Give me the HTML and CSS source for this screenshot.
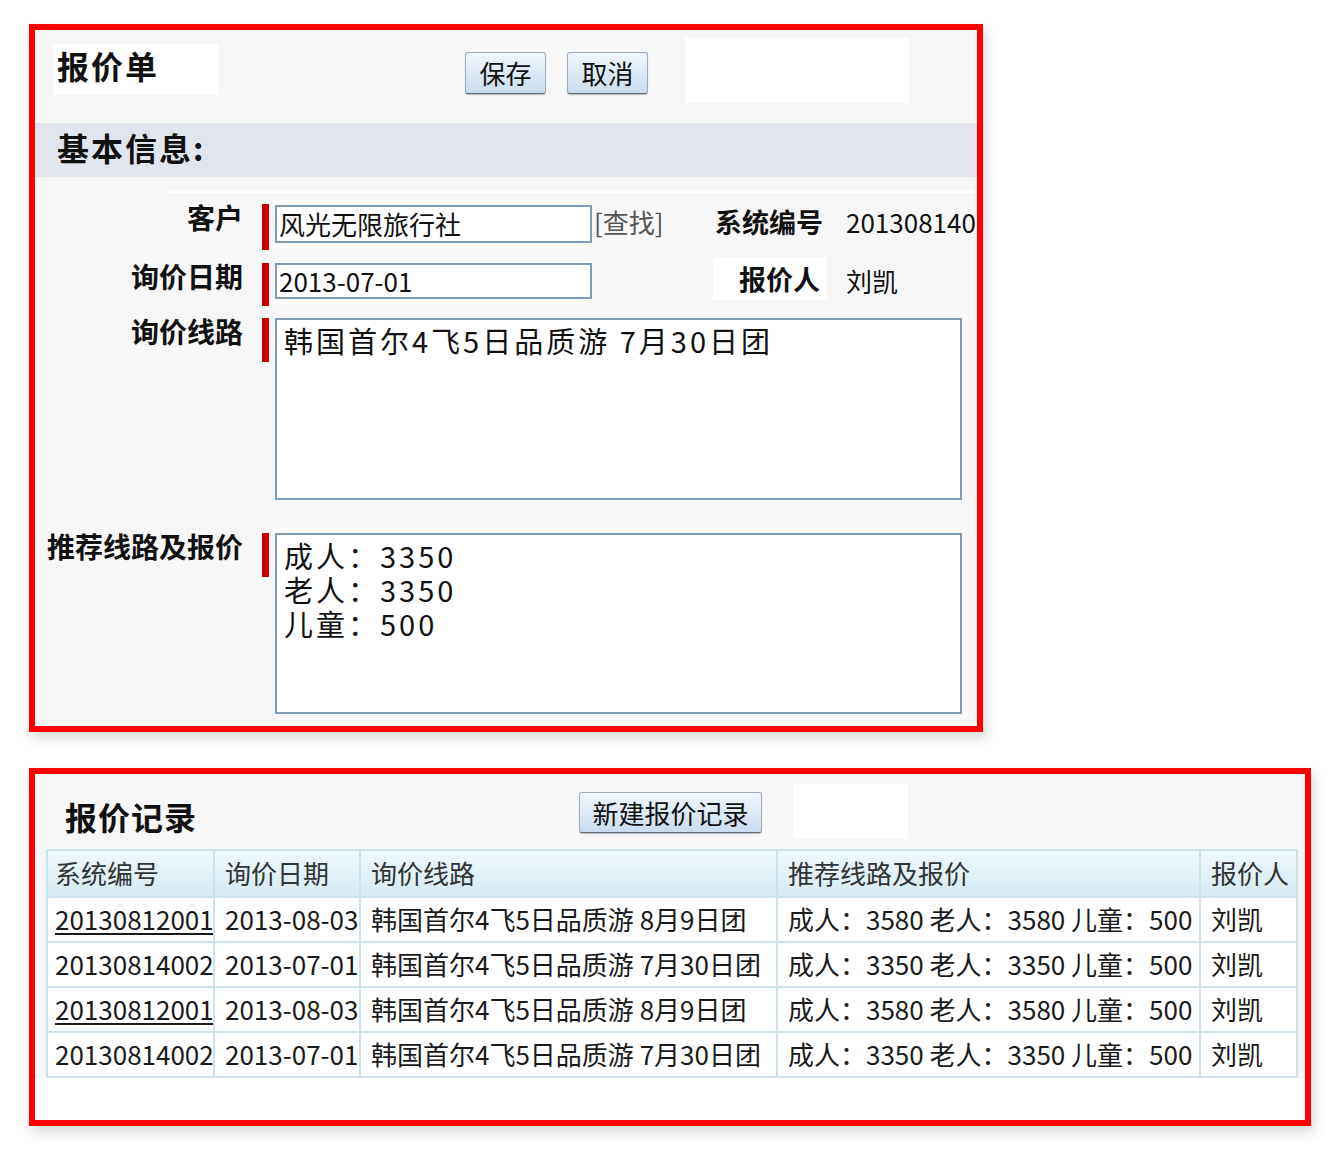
FILE: index.html
```html
<!DOCTYPE html>
<html lang="zh-CN">
<head>
    <meta charset="UTF-8">
    <meta name="viewport" content="width=device-width, initial-scale=1.0">
    <title>报价单</title>
    <link rel="stylesheet" href="styles.css">
</head>
<body>
    <div class="page">
        <div class="panel quote">
            <div class="quote-head">
                <div class="title-box">报价单</div>
                <button class="btn btn-save" type="button">保存</button>
                <button class="btn btn-cancel" type="button">取消</button>
                <div class="blank"></div>
            </div>

            <div class="band">基本信息:</div>

            <div class="form">
                <div class="rule"></div>

                <div class="row row-customer">
                    <div class="label">客户</div>
                    <div class="mark mark-1"></div>
                    <input class="field field-1" type="text" value="风光无限旅行社">
                    <span class="find">[查找]</span>
                    <span class="side-label">系统编号</span>
                    <span class="value">201308140</span>
                </div>

                <div class="row row-date">
                    <div class="label">询价日期</div>
                    <div class="mark mark-2"></div>
                    <input class="field field-2" type="text" value="2013-07-01">
                    <span class="spacer"></span>
                    <span class="side-label side-white">报价人</span>
                    <span class="value value-2">刘凯</span>
                </div>

                <div class="row row-route">
                    <div class="label">询价线路</div>
                    <div class="mark mark-3"></div>
                    <textarea class="memo memo-route" readonly>韩国首尔4飞5日品质游 7月30日团</textarea>
                </div>

                <div class="row row-price">
                    <div class="label">推荐线路及报价</div>
                    <div class="mark mark-3"></div>
                    <textarea class="memo memo-price" readonly>成人：3350
老人：3350
儿童：500</textarea>
                </div>
            </div>
        </div>

        <div class="panel records">
            <div class="rec-head">
                <div class="rec-title">报价记录</div>
                <button class="btn btn-new" type="button">新建报价记录</button>
                <div class="blank blank-small"></div>
            </div>

            <table class="rec-table">
                <colgroup>
                    <col style="width:167px">
                    <col style="width:146px">
                    <col style="width:417px">
                    <col style="width:423px">
                    <col style="width:97px">
                </colgroup>
                <thead>
                    <tr>
                        <th class="first">系统编号</th>
                        <th>询价日期</th>
                        <th>询价线路</th>
                        <th>推荐线路及报价</th>
                        <th>报价人</th>
                    </tr>
                </thead>
                <tbody>
                    <tr>
                        <td class="first"><a href="#">20130812001</a></td>
                        <td>2013-08-03</td>
                        <td>韩国首尔4飞5日品质游 8月9日团</td>
                        <td>成人：3580 老人：3580 儿童：500</td>
                        <td>刘凯</td>
                    </tr>
                    <tr>
                        <td class="first">20130814002</td>
                        <td>2013-07-01</td>
                        <td>韩国首尔4飞5日品质游 7月30日团</td>
                        <td>成人：3350 老人：3350 儿童：500</td>
                        <td>刘凯</td>
                    </tr>
                    <tr>
                        <td class="first"><a href="#">20130812001</a></td>
                        <td>2013-08-03</td>
                        <td>韩国首尔4飞5日品质游 8月9日团</td>
                        <td>成人：3580 老人：3580 儿童：500</td>
                        <td>刘凯</td>
                    </tr>
                    <tr>
                        <td class="first">20130814002</td>
                        <td>2013-07-01</td>
                        <td>韩国首尔4飞5日品质游 7月30日团</td>
                        <td>成人：3350 老人：3350 儿童：500</td>
                        <td>刘凯</td>
                    </tr>
                </tbody>
            </table>
            <div class="rec-foot"></div>
        </div>
    </div>
</body>
</html>
```

FILE: styles.css
```css
body {
    margin: 0;
    background: #fff;
    font-family: "Noto Sans CJK SC", sans-serif;
    color: #111;
}
.page {
    padding: 24px 0 40px 29px;
}
.panel {
    box-sizing: border-box;
    border: 6px solid #ff0000;
    background: #f7f7f7;
    box-shadow: 3px 6px 12px rgba(0, 0, 0, 0.16);
    overflow: hidden;
}
.quote {
    width: 954px;
    height: 708px;
}
.records {
    width: 1282px;
    height: 358px;
    margin-top: 36px;
}

/* header with buttons */
.quote-head {
    display: flex;
    height: 93px;
}
.title-box {
    box-sizing: border-box;
    margin: 14px 0 0 18px;
    width: 165px;
    height: 51px;
    padding-left: 4px;
    background: #fff;
    font-size: 32px;
    font-weight: 700;
    line-height: 42px;
    letter-spacing: 2px;
}
.btn {
    box-sizing: border-box;
    height: 42px;
    padding: 0;
    border: 1px solid #9cadbf;
    border-bottom-color: #5d6b7b;
    border-radius: 3px;
    background: linear-gradient(#f0f6fc, #cadcee);
    box-shadow: 0 1px 1px rgba(0, 0, 0, 0.25);
    font-family: "Noto Sans CJK SC", sans-serif;
    font-size: 26px;
    line-height: 36px;
    color: #111;
    cursor: pointer;
}
.btn-save {
    width: 81px;
    margin: 22px 0 0 247px;
}
.btn-cancel {
    width: 81px;
    margin: 22px 0 0 21px;
}
.blank {
    margin: 8px 0 0 37px;
    width: 224px;
    height: 65px;
    background: #fff;
}

.band {
    height: 54px;
    padding-left: 22px;
    background: #e1e6ee;
    font-size: 32px;
    font-weight: 700;
    line-height: 49px;
    letter-spacing: 2px;
}

/* form rows */
.form {
    padding-top: 13px;
}
.rule {
    height: 3px;
    margin-left: 132px;
    background: #fff;
}
.row {
    display: flex;
    align-items: flex-start;
}
.row-customer {
    margin-top: 11px;
}
.row-date {
    margin-top: 13px;
}
.row-route {
    margin-top: 12px;
}
.row-price {
    margin-top: 33px;
}
.label {
    flex-shrink: 0;
    width: 208px;
    text-align: right;
    font-size: 28px;
    font-weight: 700;
    line-height: 27px;
    white-space: nowrap;
}
.mark {
    flex-shrink: 0;
    width: 7px;
    margin: 0 6px 0 19px;
    background: #c80000;
}
.mark-1 {
    height: 46px;
}
.mark-2 {
    height: 43px;
}
.mark-3 {
    height: 44px;
}
.field {
    box-sizing: border-box;
    flex-shrink: 0;
    width: 317px;
    padding: 0 2px 2px;
    border: 2px solid #7f9db9;
    background: #fff;
    font-family: "Noto Sans CJK SC", sans-serif;
    font-size: 26px;
    color: #111;
    outline: none;
}
.field-1 {
    height: 38px;
    margin-top: 1px;
}
.field-2 {
    height: 36px;
}
.find {
    box-sizing: border-box;
    flex-shrink: 0;
    width: 119px;
    padding-left: 2px;
    color: #555;
    font-size: 26px;
    line-height: 36px;
}
.spacer {
    flex-shrink: 0;
    width: 121px;
}
.side-label {
    box-sizing: border-box;
    flex-shrink: 0;
    width: 115px;
    padding-right: 3px;
    text-align: right;
    font-size: 27px;
    font-weight: 700;
    line-height: 36px;
    white-space: nowrap;
}
.side-white {
    width: 114px;
    height: 43px;
    margin-top: -6px;
    padding: 3px 7px 0 0;
    background: #fff;
    line-height: 38px;
}
.value {
    margin-left: 20px;
    font-size: 26px;
    line-height: 36px;
    white-space: nowrap;
}
.value-2 {
    margin-left: 19px;
}
.memo {
    box-sizing: border-box;
    flex-shrink: 0;
    width: 687px;
    margin: 0;
    padding: 3px 7px;
    border: 2px solid #7f9db9;
    background: #fff;
    font-family: "Noto Sans CJK SC", sans-serif;
    font-size: 29px;
    line-height: 34px;
    letter-spacing: 3px;
    color: #111;
    resize: none;
    outline: none;
    overflow: hidden;
}
.memo-route {
    height: 182px;
}
.memo-price {
    height: 181px;
    padding-top: 3px;
}

/* records */
.rec-head {
    display: flex;
    height: 75px;
}
.rec-title {
    width: 130px;
    margin: 24px 0 0 30px;
    font-size: 32px;
    font-weight: 700;
    line-height: 36px;
    letter-spacing: 1px;
    white-space: nowrap;
}
.btn-new {
    width: 183px;
    height: 41px;
    margin: 18px 0 0 384px;
    line-height: 35px;
}
.blank-small {
    width: 115px;
    height: 55px;
    margin: 10px 0 0 31px;
}
.rec-table {
    width: 1250px;
    margin-left: 11px;
    border-collapse: collapse;
    table-layout: fixed;
    font-size: 26px;
    color: #1a1a1a;
}
.rec-table th,
.rec-table td {
    border: 2px solid #cde1ea;
    padding: 0 0 3px 10px;
    text-align: left;
    white-space: nowrap;
    overflow: hidden;
}
.rec-table th {
    height: 42px;
    background: linear-gradient(#eef8fc, #d5eaf3);
    font-weight: 400;
    color: #333;
}
.rec-table td {
    height: 40px;
    background: #fff;
}
.rec-table .first {
    padding-left: 7px;
}
.rec-table a {
    color: #1a1a1a;
    text-decoration: underline;
    text-underline-offset: 3px;
}
.rec-foot {
    height: 60px;
    background: #fff;
}
```
